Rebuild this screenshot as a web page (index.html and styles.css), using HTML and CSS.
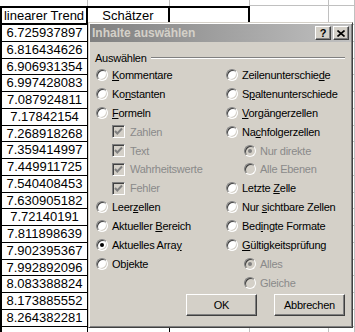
FILE: index.html
```html
<!DOCTYPE html>
<html lang="de">
<head>
    <meta charset="UTF-8">
    <title>Inhalte auswählen</title>
    <link rel="stylesheet" href="styles.css">
</head>
<body>

<div class="sheet"><!--Tabellenblatt im Hintergrund-->
    <div class="row r0"><span></span><span></span><span></span><span></span><span></span></div>
    <div class="row head"><span>linearer Trend</span><span>Schätzer</span><span></span><span></span><span></span></div>
    <div class="row"><span>6.725937897</span><span></span><span></span><span></span><span></span></div>
    <div class="row"><span>6.816434626</span><span></span><span></span><span></span><span></span></div>
    <div class="row"><span>6.906931354</span><span></span><span></span><span></span><span></span></div>
    <div class="row"><span>6.997428083</span><span></span><span></span><span></span><span></span></div>
    <div class="row"><span>7.087924811</span><span></span><span></span><span></span><span></span></div>
    <div class="row"><span>7.17842154</span><span></span><span></span><span></span><span></span></div>
    <div class="row"><span>7.268918268</span><span></span><span></span><span></span><span></span></div>
    <div class="row"><span>7.359414997</span><span></span><span></span><span></span><span></span></div>
    <div class="row"><span>7.449911725</span><span></span><span></span><span></span><span></span></div>
    <div class="row"><span>7.540408453</span><span></span><span></span><span></span><span></span></div>
    <div class="row"><span>7.630905182</span><span></span><span></span><span></span><span></span></div>
    <div class="row"><span>7.72140191</span><span></span><span></span><span></span><span></span></div>
    <div class="row"><span>7.811898639</span><span></span><span></span><span></span><span></span></div>
    <div class="row"><span>7.902395367</span><span></span><span></span><span></span><span></span></div>
    <div class="row"><span>7.992892096</span><span></span><span></span><span></span><span></span></div>
    <div class="row"><span>8.083388824</span><span></span><span></span><span></span><span></span></div>
    <div class="row"><span>8.173885552</span><span></span><span></span><span></span><span></span></div>
    <div class="row"><span>8.264382281</span><span></span><span></span><span></span><span></span></div>
    <div class="row"><span></span><span></span><span></span><span></span><span></span></div>
</div>

<div class="dlg"><!--Dialog Inhalte auswählen-->
    <div class="caption">
        <span class="cap-title">Inhalte auswählen</span>
        <span class="cap-btn help">?</span>
        <span class="cap-btn close">
            <svg width="8" height="7" viewBox="0 0 8 7"><path d="M0.5 0.5 L7.5 6.5 M7.5 0.5 L0.5 6.5" stroke="#000" stroke-width="1.6" fill="none"/></svg>
        </span>
    </div>
    <div class="dlg-body">
        <div class="group"><span>Auswählen</span><i class="etch"></i></div>
        <div class="opts">
            <div class="col">
                <div class="opt"><i class="radio"></i><span><u>K</u>ommentare</span></div>
                <div class="opt"><i class="radio"></i><span>Ko<u>n</u>stanten</span></div>
                <div class="opt"><i class="radio"></i><span><u>F</u>ormeln</span></div>
                <div class="opt sub off"><i class="check"><svg width="11" height="11" viewBox="0 0 11 11"><path d="M2 5 L4.3 7.5 L9 2.5" stroke="#808080" stroke-width="2" fill="none"/></svg></i><span>Zahlen</span></div>
                <div class="opt sub off"><i class="check"><svg width="11" height="11" viewBox="0 0 11 11"><path d="M2 5 L4.3 7.5 L9 2.5" stroke="#808080" stroke-width="2" fill="none"/></svg></i><span>Text</span></div>
                <div class="opt sub off"><i class="check"><svg width="11" height="11" viewBox="0 0 11 11"><path d="M2 5 L4.3 7.5 L9 2.5" stroke="#808080" stroke-width="2" fill="none"/></svg></i><span>Wahrheitswerte</span></div>
                <div class="opt sub off"><i class="check"><svg width="11" height="11" viewBox="0 0 11 11"><path d="M2 5 L4.3 7.5 L9 2.5" stroke="#808080" stroke-width="2" fill="none"/></svg></i><span>Fehler</span></div>
                <div class="opt"><i class="radio"></i><span>Leer<u>z</u>ellen</span></div>
                <div class="opt"><i class="radio"></i><span>Aktueller <u>B</u>ereich</span></div>
                <div class="opt"><i class="radio on"></i><span>Aktuelles Arra<u>y</u></span></div>
                <div class="opt"><i class="radio"></i><span>Ob<u>j</u>ekte</span></div>
            </div>
            <div class="col">
                <div class="opt"><i class="radio"></i><span>Zeilenunterschie<u>d</u>e</span></div>
                <div class="opt"><i class="radio"></i><span>S<u>p</u>altenunterschiede</span></div>
                <div class="opt"><i class="radio"></i><span><u>V</u>orgängerzellen</span></div>
                <div class="opt"><i class="radio"></i><span>Na<u>c</u>hfolgerzellen</span></div>
                <div class="opt sub2 off"><i class="radio on"></i><span>Nur direkte</span></div>
                <div class="opt sub2 off"><i class="radio"></i><span>Alle Ebenen</span></div>
                <div class="opt"><i class="radio"></i><span>Letzte <u>Z</u>elle</span></div>
                <div class="opt"><i class="radio"></i><span>Nur <u>s</u>ichtbare Zellen</span></div>
                <div class="opt"><i class="radio"></i><span>Bed<u>i</u>ngte Formate</span></div>
                <div class="opt"><i class="radio"></i><span><u>G</u>ültigkeitsprüfung</span></div>
                <div class="opt sub2 off"><i class="radio on"></i><span>Alles</span></div>
                <div class="opt sub2 off"><i class="radio"></i><span>Gleiche</span></div>
            </div>
        </div>
        <div class="actions">
            <button class="btn">OK</button>
            <button class="btn">Abbrechen</button>
        </div>
    </div>
</div>

</body>
</html>
```

FILE: styles.css
```css
body{
    margin: 0;
    width: 355px;
    height: 332px;
    overflow: hidden;
    position: relative;
    background: #fff;
}

/* Tabellenblatt */
.sheet{
    font-family: "Liberation Sans", Arial, sans-serif;
    font-size: 13px;
    color: #000;
}
.row{
    display: grid;
    grid-template-columns: 88px 82px 80px 79px 26px;
    height: 16.78px;
}
.row span{
    box-sizing: border-box;
    border-right: 1px solid #c0c0c0;
    border-bottom: 1px solid #c0c0c0;
    text-align: center;
    line-height: 15.78px;
    white-space: nowrap;
    overflow: hidden;
}
.row span:nth-child(1){
    border-left: 2px solid #000;
    border-right-color: #000;
    border-bottom-color: #000;
}
.row span:nth-child(2){
    border-right-color: #000;
    border-bottom-color: #000;
}
.row.r0{
    height: 6px;
}
.row.r0 span{
    border-left: 0;
    border-bottom: 0;
    border-right-color: #c0c0c0;
}
.row.r0 span:nth-child(n+4){
    border-bottom: 1px solid #c0c0c0;
}
.row.head{
    height: 19px;
}
.row.head span:nth-child(-n+3){
    border-top: 2px solid #000;
    border-bottom: 2px solid #000;
    border-right: 2px solid #000;
    line-height: 15px;
}

/* Dialog */
.dlg{
    position: absolute;
    left: 88px;
    top: 22px;
    width: 265px;
    height: 306px;
    box-sizing: border-box;
    padding: 1px;
    background: #d4d0c8;
    border: 1px solid;
    border-color: #d4d0c8 #404040 #404040 #d4d0c8;
    box-shadow: inset 1px 1px #fff, inset -1px -1px #808080;
    font-family: "Liberation Sans", Arial, sans-serif;
    font-size: 11px;
    letter-spacing: -0.25px;
    color: #000;
}
.caption{
    height: 18px;
    display: flex;
    align-items: center;
    padding: 0 2px 0 2px;
    background: linear-gradient(to right, #808080, #c0c0c0);
}
.cap-title{
    flex: 1;
    font-weight: bold;
    font-size: 12px;
    letter-spacing: 0;
    color: #d4d0c8;
}
.cap-btn{
    width: 16px;
    height: 14px;
    box-sizing: border-box;
    display: flex;
    align-items: center;
    justify-content: center;
    background: #d4d0c8;
    border: 1px solid;
    border-color: #fff #404040 #404040 #fff;
    box-shadow: inset -1px -1px #808080;
    font-weight: bold;
    font-size: 11px;
    line-height: 12px;
}
.cap-btn.help{
    margin-right: 2px;
}

.dlg-body{
    padding: 9px 6px 0 6px;
}
.group{
    display: flex;
    align-items: center;
    height: 14.5px;
    margin-left: -1px;
}
.etch{
    flex: 1;
    margin-left: 4px;
    border-top: 1px solid #808080;
    border-bottom: 1px solid #fff;
}
.opts{
    display: grid;
    grid-template-columns: 130px 1fr;
}
.opt{
    height: 18.9px;
    display: flex;
    align-items: center;
    white-space: nowrap;
}
.opt.sub{
    padding-left: 16px;
}
.opt.sub2{
    padding-left: 18px;
}
.opt.off{
    color: #8a8a8a;
}

.radio{
    width: 12px;
    height: 12px;
    flex: none;
    box-sizing: border-box;
    border-radius: 50%;
    border: 1px solid;
    border-color: #808080 #fff #fff #808080;
    box-shadow: inset 1px 1px #404040, inset -1px -1px #d4d0c8;
    background: #fff;
    margin-right: 4px;
    display: flex;
    align-items: center;
    justify-content: center;
}
.radio.on::after{
    content: "";
    width: 4px;
    height: 4px;
    border-radius: 50%;
    background: #000;
}
.off .radio{
    background: #d4d0c8;
}
.off .radio.on::after{
    background: #808080;
}

.check{
    width: 13px;
    height: 13px;
    flex: none;
    box-sizing: border-box;
    border: 1px solid;
    border-color: #808080 #fff #fff #808080;
    box-shadow: inset 1px 1px #404040, inset -1px -1px #d4d0c8;
    background: #d4d0c8;
    margin-right: 5px;
    display: flex;
    align-items: center;
    justify-content: center;
}

.actions{
    display: flex;
    justify-content: flex-end;
    gap: 17px;
    margin-top: 2px;
}
.btn{
    width: 71px;
    height: 22px;
    padding: 0;
    background: #d4d0c8;
    border: 1px solid;
    border-color: #fff #404040 #404040 #fff;
    box-shadow: inset -1px -1px #808080;
    font-family: "Liberation Sans", Arial, sans-serif;
    font-size: 11px;
    letter-spacing: -0.25px;
    color: #000;
}
```
